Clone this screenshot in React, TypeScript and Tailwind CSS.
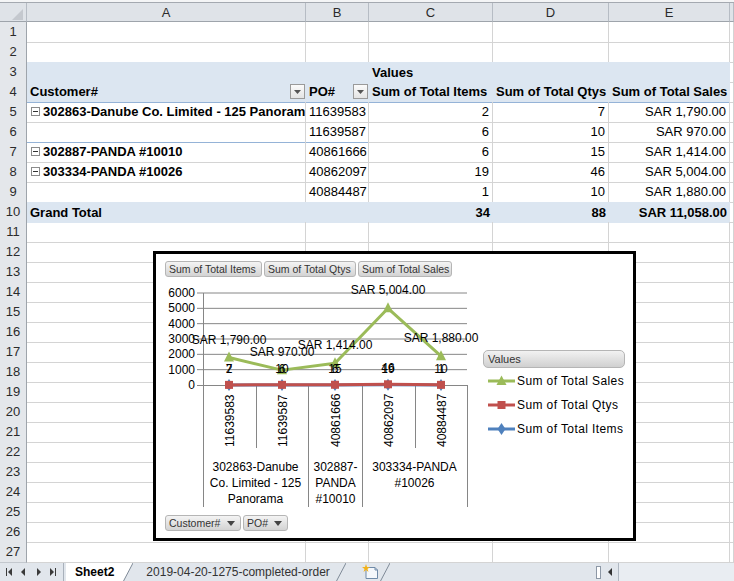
import React from 'react';

const COLS = 'grid h-[20px] grid-cols-[27px_279px_63px_124px_116px_121px_4px]';
const G = 'border-r border-b border-r-[#d4d4d4] border-b-[#d4d4d4]';
const GB = 'border-r border-b border-r-[#d4d4d4] border-b-[#95b3d7]';
const PV = 'bg-[#dce6f1]';

type Cell = { text?: React.ReactNode; cls?: string };

function RowHead({ n }: { n: number }) {
  return (
    <div className="flex items-center justify-center border-r border-b border-r-[#9ea4ab] border-b-[#c3c8ce] bg-[#e4e7eb] text-[13px] text-[#2b2b2b]">
      {n}
    </div>
  );
}

function SheetRow({ n, cells }: { n: number; cells?: Cell[] }) {
  const c = cells ?? [];
  return (
    <div className={COLS}>
      <RowHead n={n} />
      {[0, 1, 2, 3, 4, 5].map((i) => (
        <div
          key={i}
          className={`flex items-center overflow-hidden whitespace-nowrap text-[13px] leading-[19px] text-black ${c[i]?.cls ?? G}`}
        >
          {c[i]?.text}
        </div>
      ))}
    </div>
  );
}

function DropBtn() {
  return (
    <span className="flex h-[15px] w-[15px] shrink-0 items-center justify-center border border-[#9a9a9a] bg-linear-to-b from-[#fbfbfb] to-[#e4e4e4]">
      <svg width="7" height="4" viewBox="0 0 7 4">
        <polygon points="0,0 7,0 3.5,4" fill="#555" />
      </svg>
    </span>
  );
}

function Minus() {
  return (
    <span className="mr-[3px] inline-flex h-[9px] w-[9px] shrink-0 items-center justify-center border border-[#8b8b8b] bg-white">
      <span className="h-px w-[5px] bg-[#333]" />
    </span>
  );
}

const num = (v: string, border = G, bold = false): Cell => ({
  text: v,
  cls: `${border} justify-end pr-[3px] ${bold ? 'font-bold' : ''}`,
});
const po = (v: string, border = G): Cell => ({ text: v, cls: `${border} pl-[3px]` });
const cust = (v: string, border = G): Cell => ({
  text: (
    <>
      <Minus />
      {v}
    </>
  ),
  cls: `${border} pl-[4px] font-bold`,
});

const pivotRows: Record<number, Cell[]> = {
  3: [{ cls: PV }, { cls: PV }, { text: 'Values', cls: `${PV} pl-[3px] font-bold` }, { cls: PV }, { cls: PV }],
  4: [
    {
      text: (
        <>
          <span>Customer#</span>
          <DropBtn />
        </>
      ),
      cls: `${PV} border-b border-b-[#95b3d7] justify-between pl-[3px] pr-[1px] font-bold`,
    },
    {
      text: (
        <>
          <span>PO#</span>
          <DropBtn />
        </>
      ),
      cls: `${PV} border-b border-b-[#95b3d7] justify-between pl-[3px] pr-[1px] font-bold`,
    },
    { text: 'Sum of Total Items', cls: `${PV} border-b border-b-[#95b3d7] pl-[3px] font-bold` },
    { text: 'Sum of Total Qtys', cls: `${PV} border-b border-b-[#95b3d7] pl-[3px] font-bold` },
    { text: 'Sum of Total Sales', cls: `${PV} border-b border-b-[#95b3d7] pl-[3px] font-bold` },
  ],
  5: [cust('302863-Danube Co. Limited - 125 Panorama'), po('11639583'), num('2'), num('7'), num('SAR 1,790.00')],
  6: [{ cls: GB }, po('11639587', GB), num('6'), num('10'), num('SAR 970.00')],
  7: [cust('302887-PANDA #10010'), po('40861666'), num('6'), num('15'), num('SAR 1,414.00')],
  8: [cust('303334-PANDA #10026'), po('40862097'), num('19'), num('46'), num('SAR 5,004.00')],
  9: [{ cls: GB }, po('40884487', GB), num('1', GB), num('10', GB), num('SAR 1,880.00', GB)],
  10: [
    { text: 'Grand Total', cls: `${PV} pl-[3px] font-bold` },
    { cls: PV },
    { text: '34', cls: `${PV} justify-end pr-[3px] font-bold` },
    { text: '88', cls: `${PV} justify-end pr-[3px] font-bold` },
    { text: 'SAR 11,058.00', cls: `${PV} justify-end pr-[3px] font-bold` },
  ],
};

const xs = [229, 282, 335, 388, 441];
const yv = (v: number) => 385 - (v * 92) / 6000;
const sales = [1790, 970, 1414, 5004, 1880];
const qtys = [7, 10, 15, 46, 10];
const items = [2, 6, 6, 19, 1];
const salesLbl = ['SAR 1,790.00', 'SAR 970.00', 'SAR 1,414.00', 'SAR 5,004.00', 'SAR 1,880.00'];
const pos = ['11639583', '11639587', '40861666', '40862097', '40884487'];

const GREEN = '#9bbb59';
const RED = '#c0504d';
const BLUE = '#4f81bd';

function ChartBtn({ children, w, drop }: { children: React.ReactNode; w: string; drop?: boolean }) {
  return (
    <div
      className={`flex h-[16px] items-center justify-between overflow-hidden whitespace-nowrap rounded-[3px] border border-[#b5b5b5] bg-linear-to-b from-[#f4f4f4] to-[#d3d3d3] px-[3px] text-[10.5px] leading-[14px] text-[#333] ${w}`}
    >
      <span>{children}</span>
      {drop && (
        <svg width="8" height="5" viewBox="0 0 8 5" className="mr-[2px] shrink-0">
          <polygon points="0,0 8,0 4,5" fill="#444" />
        </svg>
      )}
    </div>
  );
}

function Plot() {
  const line = (vals: number[]) => vals.map((v, i) => `${xs[i]},${yv(v)}`).join(' ');
  return (
    <svg width="324" height="236" viewBox="156 277 324 236" className="shrink-0">
      {[1000, 2000, 3000, 4000, 5000, 6000].map((v) => (
        <line key={v} x1={197} x2={467} y1={yv(v)} y2={yv(v)} stroke="#868686" strokeWidth="1" />
      ))}
      {[0, 1000, 2000, 3000, 4000, 5000, 6000].map((v) => (
        <text key={v} x={195} y={yv(v) + 4} fontSize="12" textAnchor="end" fill="#000">
          {v}
        </text>
      ))}
      <line x1={203.5} x2={203.5} y1={293} y2={507} stroke="#868686" />
      <line x1={197} x2={467} y1={385.5} y2={385.5} stroke="#868686" />
      {[256.5, 415.5].map((x) => (
        <line key={x} x1={x} x2={x} y1={385} y2={448} stroke="#868686" />
      ))}
      {[308.5, 362.5, 467.5].map((x) => (
        <line key={x} x1={x} x2={x} y1={385} y2={507} stroke="#868686" />
      ))}

      <polyline points={line(items)} fill="none" stroke={BLUE} strokeWidth="3" />
      {items.map((v, i) => (
        <polygon
          key={i}
          points={`${xs[i]},${yv(v) - 6} ${xs[i] + 4},${yv(v)} ${xs[i]},${yv(v) + 6} ${xs[i] - 4},${yv(v)}`}
          fill={BLUE}
        />
      ))}
      <polyline points={line(qtys)} fill="none" stroke={RED} strokeWidth="3" />
      {qtys.map((v, i) => (
        <rect key={i} x={xs[i] - 4} y={yv(v) - 4} width="8" height="8" fill={RED} />
      ))}
      <polyline points={line(sales)} fill="none" stroke={GREEN} strokeWidth="3" strokeLinejoin="round" />
      {sales.map((v, i) => (
        <polygon
          key={i}
          points={`${xs[i]},${yv(v) - 6} ${xs[i] + 5},${yv(v) + 4} ${xs[i] - 5},${yv(v) + 4}`}
          fill={GREEN}
        />
      ))}

      {items.map((v, i) => (
        <text key={`i${i}`} x={xs[i]} y={yv(v) - 12} fontSize="12" textAnchor="middle" fill="#000">
          {v}
        </text>
      ))}
      {qtys.map((v, i) => (
        <text key={`q${i}`} x={xs[i]} y={yv(v) - 12} fontSize="12" textAnchor="middle" fill="#000">
          {v}
        </text>
      ))}
      {sales.map((v, i) => (
        <text key={`s${i}`} x={xs[i]} y={yv(v) - 14} fontSize="12" textAnchor="middle" fill="#000">
          {salesLbl[i]}
        </text>
      ))}

      {pos.map((p, i) => (
        <text key={p} transform={`translate(${xs[i] + 4.5},447) rotate(-90)`} fontSize="12" fill="#000">
          {p}
        </text>
      ))}

      <g fontSize="12" textAnchor="middle" fill="#000">
        <text x={255.5} y={471}>302863-Danube</text>
        <text x={255.5} y={487}>Co. Limited - 125</text>
        <text x={255.5} y={503}>Panorama</text>
        <text x={335.5} y={471}>302887-</text>
        <text x={335.5} y={487}>PANDA</text>
        <text x={335.5} y={503}>#10010</text>
        <text x={414.5} y={471}>303334-PANDA</text>
        <text x={414.5} y={487}>#10026</text>
      </g>
    </svg>
  );
}

function LegendItem({ color, label, marker }: { color: string; label: string; marker: 'tri' | 'sq' | 'dia' }) {
  return (
    <div className="flex h-[24px] items-center">
      <svg width="27" height="12" viewBox="0 0 27 12" className="shrink-0">
        <line x1="0" x2="27" y1="6" y2="6" stroke={color} strokeWidth="3" />
        {marker === 'tri' && <polygon points="13.5,0.5 18.5,10 8.5,10" fill={color} />}
        {marker === 'sq' && <rect x="9.5" y="2" width="8" height="8" fill={color} />}
        {marker === 'dia' && <polygon points="13.5,0 17.5,6 13.5,12 9.5,6" fill={color} />}
      </svg>
      <span className="ml-[2px] text-[12px] tracking-[0.4px] text-black">{label}</span>
    </div>
  );
}

function Chart() {
  return (
    <div className="absolute top-[251px] left-[153px] flex h-[290px] w-[483px] flex-col border-[3px] border-black bg-white">
      <div className="flex h-[23px] gap-[2px] pt-[7px] pl-[9px]">
        <ChartBtn w="w-[97px]">Sum of Total Items</ChartBtn>
        <ChartBtn w="w-[92px]">Sum of Total Qtys</ChartBtn>
        <ChartBtn w="w-[94px]">Sum of Total Sales</ChartBtn>
      </div>
      <div className="flex h-[236px]">
        <Plot />
        <div className="flex flex-col pt-[73px] pl-[3px]">
          <div className="flex h-[18px] w-[142px] items-center rounded-[5px] border border-[#b5b5b5] bg-linear-to-b from-[#f2f2f2] to-[#d0d0d0] pl-[4px] text-[11px] text-[#333]">
            Values
          </div>
          <div className="mt-[1px] flex flex-col pl-[5px]">
            <LegendItem color={GREEN} label="Sum of Total Sales" marker="tri" />
            <LegendItem color={RED} label="Sum of Total Qtys" marker="sq" />
            <LegendItem color={BLUE} label="Sum of Total Items" marker="dia" />
          </div>
        </div>
      </div>
      <div className="flex gap-[2px] pt-[2px] pl-[9px]">
        <ChartBtn w="w-[76px]" drop>
          Customer#
        </ChartBtn>
        <ChartBtn w="w-[45px]" drop>
          PO#
        </ChartBtn>
      </div>
    </div>
  );
}

function Slant({ fill }: { fill?: string }) {
  return (
    <svg width="10" height="19" viewBox="0 0 10 19" className="shrink-0">
      {fill && <polygon points="0,0 10,0 0,19" fill={fill} />}
      <line x1="0" y1="19" x2="10" y2="0" stroke="#7f8a97" strokeWidth="1" />
    </svg>
  );
}

function TabBar() {
  return (
    <div className="flex h-[19px] items-stretch border-t border-[#a9b1bb] bg-[#e1e6ec] text-[12px] text-[#333]">
      <svg width="64" height="18" viewBox="0 0 64 18" className="shrink-0">
        <g fill="#3a3a3a">
          <rect x="6" y="5" width="1" height="8" />
          <polygon points="12,5 12,13 8,9" />
          <polygon points="25,5 25,13 21,9" />
          <polygon points="37,5 37,13 41,9" />
          <polygon points="50,5 50,13 54,9" />
          <rect x="55" y="5" width="1" height="8" />
        </g>
        <line x1="63.5" y1="0" x2="63.5" y2="18" stroke="#a9b1bb" />
      </svg>
      <div className="ml-[2px] flex items-center bg-white px-[9px] font-bold text-black">Sheet2</div>
      <Slant fill="#ffffff" />
      <div className="flex items-center pr-[6px] pl-[13px]">2019-04-20-1275-completed-order</div>
      <Slant />
      <div className="flex items-center pl-[16px]">
        <svg width="18" height="16" viewBox="0 0 18 16">
          <path d="M4 3.5 H13 L15.5 6 V14.5 H4 Z" fill="#f4f7fb" stroke="#6f8aa8" />
          <path d="M13 3.5 V6 H15.5" fill="none" stroke="#6f8aa8" />
          <polygon points="4,0 5,3 8,3 5.5,5 6.5,8 4,6 1.5,8 2.5,5 0,3 3,3" fill="#f2b21b" />
        </svg>
      </div>
      <Slant />
      <div className="flex-1" />
      <div className="flex w-[142px] items-center">
        <div className="ml-[4px] h-[13px] w-[5px] border border-[#8d98a6] bg-white" />
        <svg width="8" height="10" viewBox="0 0 8 10" className="ml-[5px]">
          <polygon points="6,1 6,9 2,5" fill="#333" />
        </svg>
        <div className="ml-[4px] h-full flex-1 border-l border-[#b0b8c2] bg-[#e9edf2]" />
      </div>
    </div>
  );
}

export default function App() {
  const rows = Array.from({ length: 27 }, (_, i) => i + 1);
  return (
    <div className="relative h-[581px] w-[734px] overflow-hidden bg-white font-['Liberation_Sans',Arial,sans-serif]">
      <div className="h-[2px] bg-[#f4f5f6]" />
      <div className="grid h-[20px] grid-cols-[27px_279px_63px_124px_116px_121px_4px] border-t border-[#a4a9b0] bg-[#dfe3e8] text-[13px] text-[#2b2b2b]">
        <div className="relative border-r border-b border-r-[#b6bcc4] border-b-[#9ea4ab]">
          <svg width="26" height="18" viewBox="0 0 26 18" className="absolute inset-0">
            <polygon points="23,6 23,17 12,17" fill="#c4c8ce" />
          </svg>
        </div>
        {['A', 'B', 'C', 'D', 'E', ''].map((c, i) => (
          <div
            key={i}
            className="flex items-center justify-center border-r border-b border-r-[#b6bcc4] border-b-[#9ea4ab] leading-none"
          >
            {c}
          </div>
        ))}
      </div>
      {rows.map((n) => (
        <SheetRow key={n} n={n} cells={pivotRows[n]} />
      ))}
      <TabBar />
      <Chart />
    </div>
  );
}
